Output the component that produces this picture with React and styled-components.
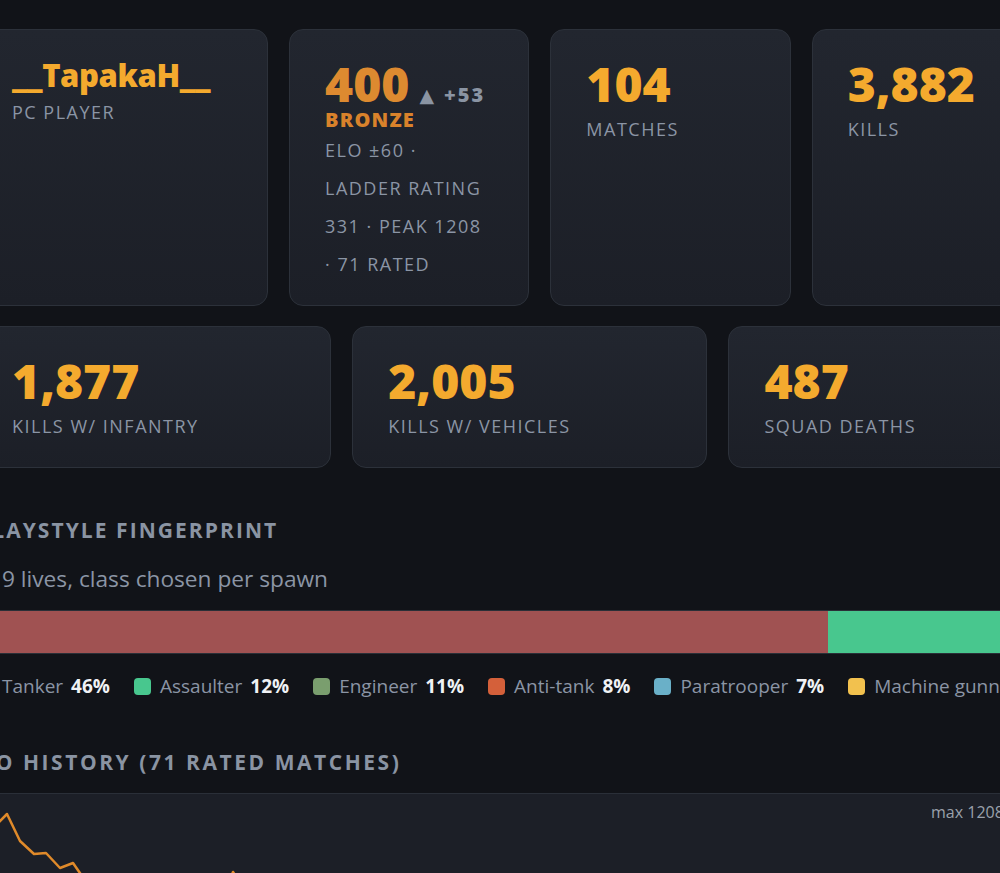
import React from "react";
import styled, { createGlobalStyle } from "styled-components";

const GlobalStyle = createGlobalStyle`
  html, body {
    margin: 0;
    padding: 0;
    background: #111318;
    overflow: hidden;
  }
  body {
    font-family: "Open Sans", "Noto Sans", "Liberation Sans", sans-serif;
    color: #8b95a5;
  }
`;

const Page = styled.main`
  width: 1860px;
  margin-left: -24px;
  padding-top: 29px;
  display: flex;
  flex-direction: column;
`;

const TopRow = styled.div`
  display: grid;
  grid-template-columns: 292px repeat(6, 1fr);
  gap: 21px;
`;

const SecondRow = styled.div`
  display: grid;
  grid-template-columns: repeat(5, 1fr);
  gap: 21px;
  margin-top: 20px;
`;

const Card = styled.div`
  background: linear-gradient(180deg, #22262f 0%, #1c1f27 100%);
  border: 1px solid #2c313a;
  border-radius: 14px;
  padding: 28px 35px 22px;
  display: flex;
  flex-direction: column;
`;

const PlayerName = styled.div`
  font-size: 31px;
  font-weight: 800;
  line-height: 35px;
  letter-spacing: -0.4px;
  color: #f4aa2e;
`;

const Big = styled.div`
  font-size: 48px;
  font-weight: 800;
  line-height: 52px;
  color: ${(p) => p.$tone || "#f4aa2e"};
`;

const Label = styled.div`
  font-size: 18px;
  line-height: 38px;
  letter-spacing: 1.5px;
  text-transform: uppercase;
  color: #8b95a5;
`;

const EloRow = styled.div`
  display: flex;
  align-items: baseline;
  gap: 10px;
  height: 51px;
`;

const Arrow = styled.span`
  font-family: "DejaVu Sans", sans-serif;
  font-size: 19px;
  color: #8a94a3;
`;

const Delta = styled.span`
  font-size: 20px;
  font-weight: 800;
  letter-spacing: 2px;
  color: #8a94a3;
`;

const Tier = styled.div`
  font-size: 20px;
  font-weight: 800;
  line-height: 22px;
  letter-spacing: 1.2px;
  color: #d9822b;
`;

const Section = styled.section`
  margin-top: 48px;
  display: flex;
  flex-direction: column;
`;

const Heading = styled.h2`
  margin: 0 0 0 ${(p) => p.$shift || 0}px;
  font-size: 21px;
  font-weight: 700;
  line-height: 28px;
  letter-spacing: ${(p) => p.$spacing || 2.3}px;
  text-transform: uppercase;
  color: #8a94a3;
`;

const Sub = styled.p`
  margin: 21px 0 0;
  font-size: 22.7px;
  line-height: 28px;
  color: #8b95a5;
`;

const Bar = styled.div`
  margin-top: 17px;
  height: 42px;
  display: flex;
  border: 1px solid #2a2f37;
  border-radius: 4px;
  overflow: hidden;
`;

const Segment = styled.div`
  height: 100%;
  background: ${(p) => p.$color};
`;

const Legend = styled.div`
  margin-top: 18px;
  display: flex;
  align-items: center;
  gap: 24px;
  height: 28px;
`;

const LegendItem = styled.div`
  display: flex;
  align-items: center;
  gap: 9px;
  font-size: 19px;
  white-space: nowrap;
`;

const Swatch = styled.span`
  width: 17px;
  height: 17px;
  border-radius: 4px;
  background: ${(p) => p.$color};
`;

const Pct = styled.b`
  color: #f0f2f5;
  font-weight: 700;
  margin-left: -1px;
`;

const ChartPanel = styled.div`
  margin-top: 17px;
  position: relative;
  height: 300px;
  background: #1c1f27;
  border-top: 1px solid #2a2f38;
`;

const MaxTag = styled.span`
  position: absolute;
  top: 7px;
  left: 955px;
  font-size: 16px;
  color: #9aa1ab;
`;

const topCards = [
  { value: "104", label: "Matches" },
  { value: "3,882", label: "Kills" },
  { value: "2,411", label: "Deaths" },
  { value: "1.61", label: "K/D ratio" },
  { value: "54%", label: "Win rate" },
];

const secondCards = [
  { value: "1,877", label: "Kills w/ infantry" },
  { value: "2,005", label: "Kills w/ vehicles" },
  { value: "487", label: "Squad deaths" },
  { value: "312", label: "Headshots" },
  { value: "96h", label: "Time played" },
];

const classes = [
  { name: "Tanker", pct: 46, share: 46, color: "#a05252" },
  { name: "Assaulter", pct: 12, share: 12, color: "#48c78e" },
  { name: "Engineer", pct: 11, share: 11, color: "#7a9e6e" },
  { name: "Anti-tank", pct: 8, share: 8, color: "#d4603a" },
  { name: "Paratrooper", pct: 7, share: 7, color: "#6ab0c8" },
  { name: "Machine gunner", pct: 6, share: 6.2, color: "#f2c14e" },
  { name: "Radioman", pct: 4, share: 4.2, color: "#9b7fd1" },
  { name: "Sniper", pct: 3, share: 3, color: "#c97fb0" },
  { name: "Mortar", pct: 2, share: 2, color: "#8e9aa8" },
  { name: "Flamethrower", pct: 1, share: 1, color: "#e07b4f" },
];

const totalShare = classes.reduce((s, c) => s + c.share, 0);

const eloPoints =
  "0,52 14,40 24,27 31,20 44,47 58,60 70,59 84,74 97,69 106,82 120,110 150,130 " +
  "190,150 230,120 250,95 257,78 266,92 290,118 330,100 370,140 410,126 450,160";

function App() {
  return (
    <>
      <GlobalStyle />
      <Page>
        <TopRow>
          <Card>
            <PlayerName>__TapakaH__</PlayerName>
            <Label>PC player</Label>
          </Card>
          <Card>
            <EloRow>
              <Big $tone="#dd8a30">400</Big>
              <Arrow>▲</Arrow>
              <Delta>+53</Delta>
            </EloRow>
            <Tier>BRONZE</Tier>
            <Label>ELO ±60 · Ladder rating 331 · peak 1208 · 71 rated</Label>
          </Card>
          {topCards.map((c) => (
            <Card key={c.label}>
              <Big>{c.value}</Big>
              <Label>{c.label}</Label>
            </Card>
          ))}
        </TopRow>

        <SecondRow>
          {secondCards.map((c) => (
            <Card key={c.label}>
              <Big>{c.value}</Big>
              <Label>{c.label}</Label>
            </Card>
          ))}
        </SecondRow>

        <Section>
          <Heading $shift={1} $spacing={2.05}>Playstyle fingerprint</Heading>
          <Sub>119 lives, class chosen per spawn</Sub>
          <Bar>
            {classes.map((c) => (
              <Segment
                key={c.name}
                $color={c.color}
                style={{ width: `${(c.share / totalShare) * 100}%` }}
              />
            ))}
          </Bar>
          <Legend>
            {classes.map((c) => (
              <LegendItem key={c.name}>
                <Swatch $color={c.color} />
                {c.name}
                <Pct>{c.pct}%</Pct>
              </LegendItem>
            ))}
          </Legend>
        </Section>

        <Section>
          <Heading $shift={-9} $spacing={2.55}>Elo history (71 rated matches)</Heading>
          <ChartPanel>
            <svg width="1860" height="300" viewBox="0 0 1860 300">
              <polyline
                points={eloPoints}
                fill="none"
                stroke="#e08a2a"
                strokeWidth="2.5"
                strokeLinejoin="round"
              />
            </svg>
            <MaxTag>max 1208</MaxTag>
          </ChartPanel>
        </Section>
      </Page>
    </>
  );
}

export default App;
